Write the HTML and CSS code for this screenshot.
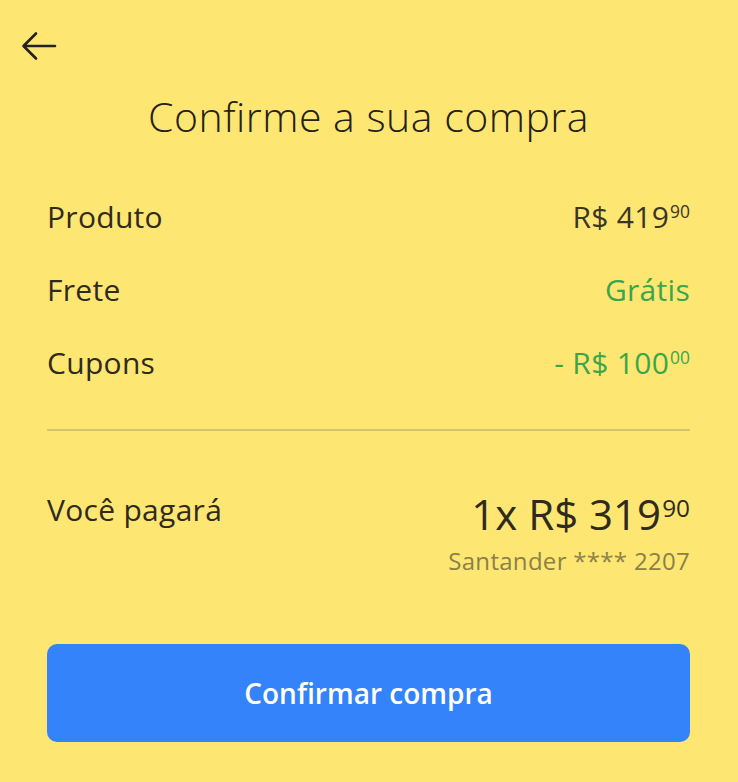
FILE: index.html
```html
<!DOCTYPE html>
<html>

<head>
  <title>Confirme a sua compra</title>
  <meta charset="UTF-8">
  <meta name="viewport" content="width=device-width, initial-scale=1.0">
  <link rel="stylesheet" href="styles.css">
</head>

<body>
  <div class="screen">
    <header class="topbar">
      <button class="back" aria-label="Voltar">
        <svg width="36" height="30" viewBox="0 0 36 30">
          <path d="M34 15H3M15 2.5L2.5 15 15 27.5" fill="none" stroke="#222" stroke-width="2.6" stroke-linecap="round" stroke-linejoin="round" />
        </svg>
      </button>
    </header>

    <h1 class="title">Confirme a sua compra</h1>

    <section class="summary">
      <div class="row">
        <span class="label">Produto</span>
        <span class="value">R$ 419<sup>90</sup></span>
      </div>
      <div class="row">
        <span class="label">Frete</span>
        <span class="value green">Grátis</span>
      </div>
      <div class="row">
        <span class="label">Cupons</span>
        <span class="value green">- R$ 100<sup>00</sup></span>
      </div>
    </section>

    <hr class="divider">

    <section class="total">
      <span class="label">Você pagará</span>
      <div class="total-value">
        <div class="price">1x R$ 319<sup>90</sup></div>
        <div class="card">Santander **** 2207</div>
      </div>
    </section>

    <button class="confirm">Confirmar compra</button>
  </div>
</body>

</html>
```

FILE: styles.css
```css
body {
  background-color: #fee673;
  font-family: "Open Sans", Lato, sans-serif;
  color: #2f2b1c;
  margin: 0;
  padding: 0;
}

.screen {
  padding: 0 48px 0 47px;
}

.topbar {
  height: 92px;
  display: flex;
  align-items: center;
}

.back {
  background: none;
  border: none;
  padding: 0;
  margin-left: -26px;
  width: 36px;
  height: 30px;
  cursor: pointer;
}

.title {
  margin: 0;
  text-align: center;
  font-size: 41px;
  font-weight: 300;
  line-height: 48px;
  letter-spacing: 0.5px;
  color: #24211a;
}

.summary {
  margin-top: 40px;
}

.row {
  display: flex;
  justify-content: space-between;
  align-items: center;
  height: 73px;
  font-size: 30px;
  line-height: 36px;
  letter-spacing: 0.3px;
}

.value {
  color: #3a3624;
}

.value.green {
  color: #3aa64a;
}

sup {
  font-size: 0.58em;
  vertical-align: top;
  line-height: 1;
  position: relative;
  top: 0.24em;
  margin-left: 1px;
  letter-spacing: 0;
}

.divider {
  border: none;
  border-top: 2px solid #d3c56a;
  margin: 30px 0 0 0;
}

.total {
  display: flex;
  justify-content: space-between;
  align-items: flex-start;
  margin-top: 61px;
}

.total .label {
  font-size: 30px;
  line-height: 36px;
  letter-spacing: 0.3px;
}

.total-value {
  text-align: right;
}

.price {
  font-size: 42px;
  line-height: 48px;
  margin-top: -2px;
}

.card {
  font-size: 24px;
  line-height: 30px;
  color: #8b8146;
  margin-top: 8px;
  letter-spacing: 0.3px;
}

.confirm {
  display: block;
  width: 100%;
  height: 98px;
  margin-top: 68px;
  border: none;
  border-radius: 10px;
  background-color: #3483fa;
  color: #fff;
  font-family: "Open Sans", Lato, sans-serif;
  font-size: 28px;
  font-weight: 600;
  cursor: pointer;
}
```
